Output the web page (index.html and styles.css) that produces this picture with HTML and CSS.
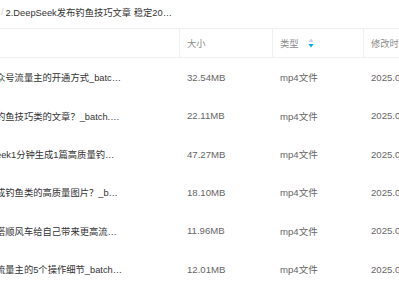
FILE: index.html
```html
<!DOCTYPE html>
<html lang="zh">
<head>
<meta charset="utf-8">
<link rel="stylesheet" href="styles.css">
</head>
<body>
<div class="crumb"><span class="sep">/</span><span class="crumb-title">2.DeepSeek发布钓鱼技巧文章 稳定2025年引流方法合集</span></div>
<div class="table">
  <div class="row head">
    <div class="cell name"></div>
    <div class="cell col">大小</div>
    <div class="cell col">类型<span class="sort"><svg width="6" height="10" viewBox="0 0 6 10"><path d="M3 0.5 L5.6 4 L0.4 4 Z" fill="#c9d3e0"/><path d="M3 9.5 L5.6 6 L0.4 6 Z" fill="#06a7ff"/></svg></span></div>
    <div class="cell col">修改时间</div>
  </div>
  <div class="row">
    <div class="cell name"><span class="fname">众号流量主的开通方式_batch.mp4</span></div>
    <div class="cell val">32.54MB</div>
    <div class="cell val">mp4文件</div>
    <div class="cell val">2025.02.19 10:26</div>
  </div>
  <div class="row">
    <div class="cell name"><span class="fname">钓鱼技巧类的文章？_batch.mp4</span></div>
    <div class="cell val">22.11MB</div>
    <div class="cell val">mp4文件</div>
    <div class="cell val">2025.02.19 10:26</div>
  </div>
  <div class="row">
    <div class="cell name"><span class="fname">eek1分钟生成1篇高质量钓鱼文章_batch.mp4</span></div>
    <div class="cell val">47.27MB</div>
    <div class="cell val">mp4文件</div>
    <div class="cell val">2025.02.19 10:26</div>
  </div>
  <div class="row">
    <div class="cell name"><span class="fname">成钓鱼类的高质量图片？_batch.mp4</span></div>
    <div class="cell val">18.10MB</div>
    <div class="cell val">mp4文件</div>
    <div class="cell val">2025.02.19 10:26</div>
  </div>
  <div class="row">
    <div class="cell name"><span class="fname">搭顺风车给自己带来更高流量_batch.mp4</span></div>
    <div class="cell val">11.96MB</div>
    <div class="cell val">mp4文件</div>
    <div class="cell val">2025.02.19 10:26</div>
  </div>
  <div class="row">
    <div class="cell name"><span class="fname">流量主的5个操作细节_batch.mp4</span></div>
    <div class="cell val">12.01MB</div>
    <div class="cell val">mp4文件</div>
    <div class="cell val">2025.02.19 10:26</div>
  </div>
</div>
</body>
</html>
```

FILE: styles.css
```css
html, body {
  margin: 0;
  padding: 0;
  background: #fff;
  overflow: hidden;
}
body {
  font-family: "Liberation Sans", "Noto Sans CJK SC", sans-serif;
  font-size: 9.3px;
  color: #333;
  width: 399px;
  height: 300px;
}
.crumb {
  height: 27.7px;
  display: flex;
  align-items: center;
  white-space: nowrap;
  padding-bottom: 3px;
  box-sizing: border-box;
}
.sep {
  color: #cfcfcf;
  margin-left: 1px;
  margin-right: 2px;
}
.crumb-title {
  display: inline-block;
  max-width: 168px;
  overflow: hidden;
  text-overflow: ellipsis;
  color: #333;
}
.table {
  width: 500px;
}
.row {
  display: grid;
  grid-template-columns: 179px 93px 91px 137px;
  height: 38.33px;
  align-items: stretch;
}
.row.head {
  height: 30.6px;
  border-top: 1px solid #efefef;
  border-bottom: 1px solid #efefef;
  box-sizing: border-box;
}
.cell {
  display: flex;
  align-items: center;
  white-space: nowrap;
  overflow: hidden;
}
.head .col {
  border-left: 1px solid #efefef;
  padding-left: 7px;
  color: #8c8c8c;
}
.sort {
  display: inline-flex;
  margin-left: 9px;
}
.val {
  padding-left: 8px;
  color: #666;
  font-size: 9.6px;
}
.fname {
  display: block;
  margin-left: -4px;
  width: 127px;
  overflow: hidden;
  text-overflow: ellipsis;
  color: #333;
}
```
